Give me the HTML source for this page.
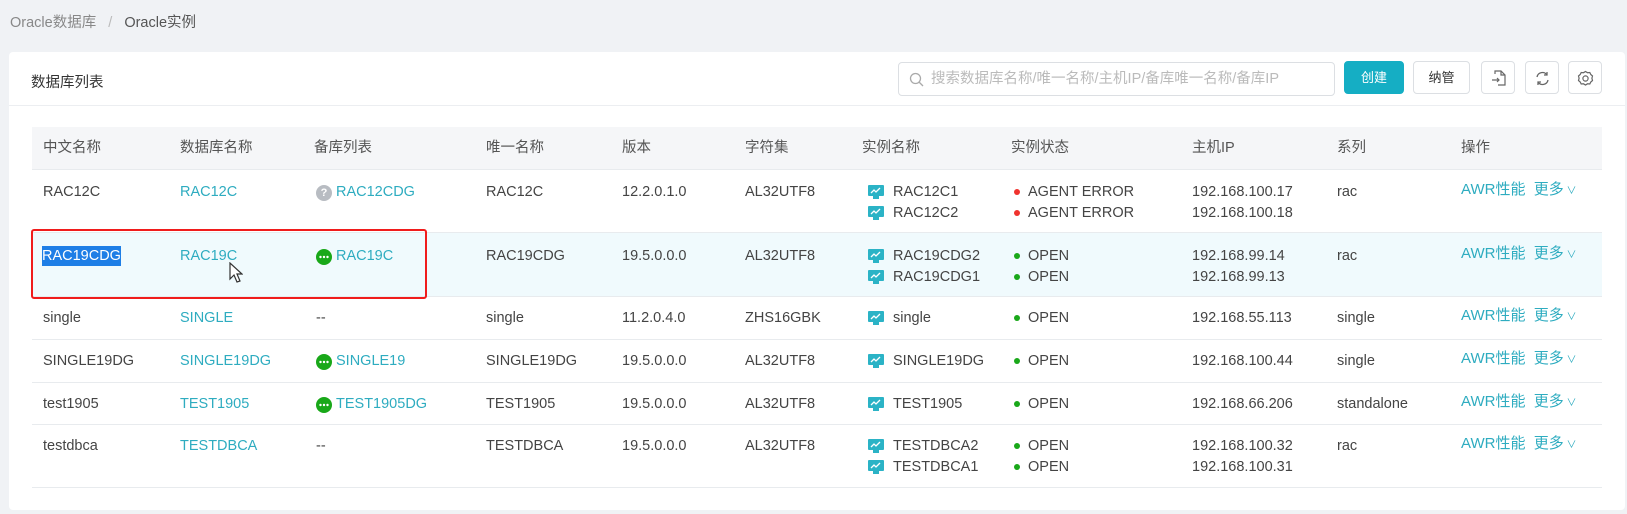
<!DOCTYPE html><html><head><meta charset="utf-8"><style>
body{margin:0;width:1627px;height:514px;background:#f0f2f5;font-family:"Liberation Sans","Noto Sans CJK SC",sans-serif;font-size:14.5px;color:#444;position:relative;overflow:hidden}
.a{position:absolute;white-space:nowrap;line-height:18px}
.l{color:#2eacc0}
.card{position:absolute;left:9px;top:52px;width:1616px;height:458px;background:#fff;border-radius:4px}
.hl{position:absolute;left:32px;width:1570px;height:1px;background:#e8ebee}
.btn{position:absolute;top:61px;height:33px;border:1px solid #dcdfe3;border-radius:4px;background:#fff;box-sizing:border-box}
.ic{position:absolute;width:16px;height:14px}
.d{position:absolute;width:6px;height:6px;border-radius:50%}
.g{position:absolute;width:16px;height:16px;border-radius:50%;background:#19a819}
</style></head><body>
<div class="a" style="left:10px;top:14px;color:#888">Oracle数据库 <span style="color:#bbb;margin:0 8px">/</span> <span style="color:#555">Oracle实例</span></div>
<div class="card"></div>
<div class="a" style="left:31px;top:74px;color:#333">数据库列表</div>
<div style="position:absolute;left:9px;top:105px;width:1616px;height:1px;background:#eceef1"></div>
<div class="btn" style="left:898px;width:437px;top:62px;height:34px"><svg style="position:absolute;left:10px;top:9px" width="15" height="15" viewBox="0 0 15 15" fill="none" stroke="#aaa" stroke-width="1.3"><circle cx="6.5" cy="6.5" r="5"/><path d="M10 10l4 4"/></svg><span class="a" style="left:32px;top:7px;color:#bbb">搜索数据库名称/唯一名称/主机IP/备库唯一名称/备库IP</span></div>
<div class="btn" style="left:1344px;width:60px;background:#15aec4;border-color:#15aec4;color:#fff;font-size:13px;text-align:center;line-height:31px">创建</div>
<div class="btn" style="left:1413px;width:57px;color:#333;font-size:13px;text-align:center;line-height:31px">纳管</div>
<div class="btn" style="left:1481px;width:34px"><svg style="position:absolute;left:8px;top:7px" width="18" height="18" viewBox="0 0 18 18" fill="none" stroke="#666" stroke-width="1.2"><path d="M5 5V2h6l4 4v10H8"/><path d="M11 2v4h4"/><path d="M2 11h7M7 9l2 2-2 2"/></svg></div>
<div class="btn" style="left:1525px;width:34px"><svg style="position:absolute;left:8px;top:8px" width="17" height="17" viewBox="0 0 17 17" fill="none" stroke="#666" stroke-width="1.3"><path d="M3 7a5.5 5.5 0 0 1 10-2M14 10a5.5 5.5 0 0 1-10 2"/><path d="M13 2v3h-3M4 15v-3h3"/></svg></div>
<div class="btn" style="left:1568px;width:34px"><svg style="position:absolute;left:8px;top:8px" width="17" height="17" viewBox="0 0 17 17" fill="none" stroke="#666" stroke-width="1.2"><path d="M8.5 1.5l2 1.2 2.3-.2 1 2 1.7 1.5-.6 2.2.6 2.3-1.7 1.5-1 2-2.3-.2-2 1.2-2-1.2-2.3.2-1-2-1.7-1.5.6-2.3-.6-2.2 1.7-1.5 1-2 2.3.2z"/><circle cx="8.5" cy="8.5" r="2.6"/></svg></div>
<div style="position:absolute;left:32px;top:127px;width:1570px;height:42px;background:#f5f6f8"></div>
<div style="position:absolute;left:32px;top:232px;width:1570px;height:64px;background:#f0fafd"></div>
<div class="hl" style="top:169px"></div><div class="hl" style="top:232px"></div><div class="hl" style="top:296px"></div><div class="hl" style="top:339px"></div><div class="hl" style="top:382px"></div><div class="hl" style="top:424px"></div><div class="hl" style="top:487px"></div>
<div style="position:absolute;left:31px;top:229px;width:392px;height:66px;border:2px solid #f01c1c;border-radius:3px"></div>
<div id="t"></div>
<script>
var H=["中文名称",43,"数据库名称",180,"备库列表",314,"唯一名称",486,"版本",622,"字符集",745,"实例名称",862,"实例状态",1011,"主机IP",1192,"系列",1337,"操作",1461];
var s="";for(var i=0;i<H.length;i+=2)s+='<div class="a" style="left:'+H[i+1]+'px;top:139px;color:#555">'+H[i]+'</div>';
var R=[[183,"RAC12C","RAC12C","q","RAC12CDG","RAC12C","12.2.0.1.0","AL32UTF8",["RAC12C1","RAC12C2"],"AGENT ERROR","#f0332e",["192.168.100.17","192.168.100.18"],"rac"],
[247,"RAC19CDG","RAC19C","g","RAC19C","RAC19CDG","19.5.0.0.0","AL32UTF8",["RAC19CDG2","RAC19CDG1"],"OPEN","#1aa81a",["192.168.99.14","192.168.99.13"],"rac"],
[309,"single","SINGLE","","--","single","11.2.0.4.0","ZHS16GBK",["single"],"OPEN","#1aa81a",["192.168.55.113"],"single"],
[352,"SINGLE19DG","SINGLE19DG","g","SINGLE19","SINGLE19DG","19.5.0.0.0","AL32UTF8",["SINGLE19DG"],"OPEN","#1aa81a",["192.168.100.44"],"single"],
[395,"test1905","TEST1905","g","TEST1905DG","TEST1905","19.5.0.0.0","AL32UTF8",["TEST1905"],"OPEN","#1aa81a",["192.168.66.206"],"standalone"],
[437,"testdbca","TESTDBCA","","--","TESTDBCA","19.5.0.0.0","AL32UTF8",["TESTDBCA2","TESTDBCA1"],"OPEN","#1aa81a",["192.168.100.32","192.168.100.31"],"rac"]];
function t(x,y,c,cl){return '<div class="a'+(cl?' '+cl:'')+'" style="left:'+x+'px;top:'+y+'px">'+c+'</div>';}
R.forEach(function(r){var y=r[0];
s+=r[1]=="RAC19CDG"?'<div class="a" style="left:42px;top:'+(y-1)+'px;background:#1e7ee6;color:#fff;line-height:20px">RAC19CDG</div>':t(43,y,r[1]);
s+=t(180,y,r[2],"l");
if(r[3]=="q")s+='<div class="g" style="left:316px;top:'+(y+2)+'px;background:#b8bcc2;color:#fff;font-size:11px;line-height:16px;text-align:center;font-weight:bold">?</div>';
if(r[3]=="g")s+='<svg class="g" style="left:316px;top:'+(y+2)+'px" viewBox="0 0 16 16"><circle cx="4.5" cy="8" r="1.2" fill="#fff"/><circle cx="8" cy="8" r="1.2" fill="#fff"/><circle cx="11.5" cy="8" r="1.2" fill="#fff"/></svg>';
s+=t(r[3]?336:316,y,r[4],r[3]?"l":"");
s+=t(486,y,r[5]);s+=t(622,y,r[6]);s+=t(745,y,r[7]);
r[8].forEach(function(n,k){var yy=y+k*21;
s+='<svg class="ic" style="left:868px;top:'+(yy+2)+'px" viewBox="0 0 16 14"><rect x="0" y="0" width="16" height="11" rx="1" fill="#2bb3c6"/><rect x="5" y="11" width="6" height="3" fill="#2bb3c6"/><path d="M3 8l3-3 2 2 4-4" stroke="#fff" stroke-width="1.3" fill="none"/></svg>';
s+=t(893,yy,n);
s+='<div class="d" style="left:1014px;top:'+(yy+6)+'px;background:'+r[10]+'"></div>'+t(1028,yy,r[9]);});
r[11].forEach(function(n,k){s+=t(1192,y+k*21,n);});
s+=t(1337,y,r[12]);
s+='<div class="a l" style="left:1461px;top:'+(y-2)+'px;font-size:15px">AWR性能 &nbsp;更多<span style="font-size:10px"> ∨</span></div>';
});
document.getElementById("t").innerHTML=s;
</script>
<svg style="position:absolute;left:229px;top:262px" width="14" height="22" viewBox="0 0 14 22"><path d="M1 1v16l4-4 3 7 3-1-3-7h5z" fill="#fff" stroke="#333" stroke-width="1.2"/></svg>
</body></html>
